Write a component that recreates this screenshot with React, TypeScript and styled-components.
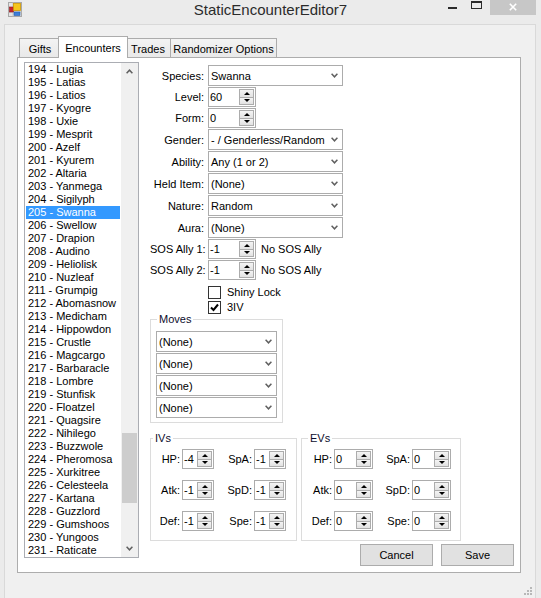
import { FC } from "react";
import styled, { createGlobalStyle } from "styled-components";

const GlobalStyle = createGlobalStyle`
  * {
    box-sizing: border-box;
  }
  html,
  body {
    margin: 0;
    padding: 0;
    background: #ebebeb;
  }
  body {
    font-family: "Liberation Sans", Arial, sans-serif;
    font-size: 11px;
    color: #000;
  }
`;

const pokemon = [
  "Lugia", "Latias", "Latios", "Kyogre", "Uxie", "Mesprit", "Azelf", "Kyurem",
  "Altaria", "Yanmega", "Sigilyph", "Swanna", "Swellow", "Drapion", "Audino",
  "Heliolisk", "Nuzleaf", "Grumpig", "Abomasnow", "Medicham", "Hippowdon",
  "Crustle", "Magcargo", "Barbaracle", "Lombre", "Stunfisk", "Floatzel",
  "Quagsire", "Nihilego", "Buzzwole", "Pheromosa", "Xurkitree", "Celesteela",
  "Kartana", "Guzzlord", "Gumshoos", "Yungoos", "Raticate",
];
const FIRST_ID = 194;
const SELECTED_ID = 205;

const tabs = [
  { title: "Gifts", width: 42 },
  { title: "Encounters", width: 70, active: true },
  { title: "Trades", width: 46 },
  { title: "Randomizer Options", width: 107 },
];

const comboFields = [
  { label: "Gender:", value: "- / Genderless/Random" },
  { label: "Ability:", value: "Any (1 or 2)" },
  { label: "Held Item:", value: "(None)" },
  { label: "Nature:", value: "Random" },
  { label: "Aura:", value: "(None)" },
];

const statRows = [
  ["HP:", "SpA:"],
  ["Atk:", "SpD:"],
  ["Def:", "Spe:"],
];
const ivValues = [
  ["-4", "-1"],
  ["-1", "-1"],
  ["-1", "-1"],
];

const Chevron: FC<{ $up?: boolean }> = ({ $up }) => (
  <svg width="7" height="5" viewBox="0 0 7 5">
    <path
      d={$up ? "M0.6 4.2 L3.5 1.2 L6.4 4.2" : "M0.6 0.8 L3.5 3.8 L6.4 0.8"}
      fill="none"
      stroke="#606060"
      strokeWidth="1.5"
    />
  </svg>
);

const Combo: FC<{ value: string; width: number }> = ({ value, width }) => (
  <ComboBox $width={width}>
    <span>{value}</span>
    <Chevron />
  </ComboBox>
);

const Numeric: FC<{ value: string; width: number }> = ({ value, width }) => (
  <NumericBox $width={width}>
    <NumericText>{value}</NumericText>
    <Spinner>
      <SpinButton>
        <Arrow $dir="up" />
      </SpinButton>
      <SpinButton>
        <Arrow $dir="down" />
      </SpinButton>
    </Spinner>
  </NumericBox>
);

const Check: FC<{ label: string; checked?: boolean }> = ({ label, checked }) => (
  <CheckRow>
    <CheckBox>
      {checked && (
        <svg width="9" height="9" viewBox="0 0 9 9">
          <path d="M1 4.5 L3.5 7 L8 1.5" fill="none" stroke="#000" strokeWidth="2" />
        </svg>
      )}
    </CheckBox>
    {label}
  </CheckRow>
);

const StatGroup: FC<{
  title: string;
  indent: number;
  width: number;
  columns: string;
  boxWidth: number;
  values: string[][];
}> = ({ title, indent, width, columns, boxWidth, values }) => (
  <GroupBox $width={width} $padding="4px 0 9px 0">
    <GroupTitle $indent={indent}>{title}</GroupTitle>
    <StatGrid $columns={columns}>
      {statRows.map((row, r) =>
        row.map((label, c) => [
          <StatLabel key={label}>{label}</StatLabel>,
          <Numeric key={label + "v"} value={values[r][c]} width={boxWidth} />,
        ]),
      )}
    </StatGrid>
  </GroupBox>
);

const App: FC = () => {
  return (
    <>
      <GlobalStyle />
      <Window>
        <TitleBar>
          <IconSlot>
            <svg width="14" height="15" viewBox="0 0 14 15">
              <rect x="0.5" y="0.5" width="13" height="14" fill="#e4e4e4" stroke="#a8a8a8" />
              <line x1="5" y1="0.5" x2="5" y2="14.5" stroke="#c4c4c4" />
              <line x1="0.5" y1="10" x2="13.5" y2="10" stroke="#c4c4c4" />
              <rect x="1.5" y="5" width="4" height="5" fill="#c9252b" stroke="#8e1418" strokeWidth="0.6" />
              <rect x="5.5" y="1.5" width="7" height="7" fill="#f5c51c" stroke="#cf9700" strokeWidth="0.8" />
              <rect x="6" y="10" width="6" height="3.5" fill="#3c7ed8" stroke="#235bb0" strokeWidth="0.6" />
            </svg>
          </IconSlot>
          <Title>StaticEncounterEditor7</Title>
          <Controls>
            <CaptionButton $width={22}>
              <svg width="9" height="15" viewBox="0 0 9 15">
                <rect x="0" y="7" width="9" height="2" fill="#2b2b2b" />
              </svg>
            </CaptionButton>
            <CaptionButton $width={27}>
              <svg width="11" height="15" viewBox="0 0 11 15">
                <rect x="0.5" y="1.5" width="10" height="7" fill="none" stroke="#2b2b2b" />
                <rect x="0" y="1" width="11" height="2" fill="#2b2b2b" />
              </svg>
            </CaptionButton>
            <CaptionButton $width={46} $close>
              <svg width="8" height="15" viewBox="0 0 8 15">
                <path d="M0.8 3.8 L7.2 10.2 M7.2 3.8 L0.8 10.2" stroke="#fff" strokeWidth="1.6" />
              </svg>
            </CaptionButton>
          </Controls>
        </TitleBar>

        <Client>
          <TabStrip>
            {tabs.map((tab) => (
              <Tab key={tab.title} $width={tab.width} $active={!!tab.active}>
                {tab.title}
              </Tab>
            ))}
          </TabStrip>

          <TabPage>
            <ListBox>
              <ListItems>
                {pokemon.map((name, i) => (
                  <ListItem key={name} $selected={FIRST_ID + i === SELECTED_ID}>
                    {FIRST_ID + i} - {name}
                  </ListItem>
                ))}
              </ListItems>
              <ScrollBar>
                <ScrollArrow>
                  <Chevron $up />
                </ScrollArrow>
                <ScrollTrack>
                  <ScrollThumb $offset={353} $size={70} />
                </ScrollTrack>
                <ScrollArrow>
                  <Chevron />
                </ScrollArrow>
              </ScrollBar>
            </ListBox>

            <EditorColumn>
              <FieldGrid>
                <FieldLabel>Species:</FieldLabel>
                <Combo value="Swanna" width={135} />
                <FieldLabel>Level:</FieldLabel>
                <Numeric value="60" width={48} />
                <FieldLabel>Form:</FieldLabel>
                <Numeric value="0" width={48} />
                {comboFields.map((field) => [
                  <FieldLabel key={field.label}>{field.label}</FieldLabel>,
                  <Combo key={field.label + "c"} value={field.value} width={135} />,
                ])}
                <FieldLabel>SOS Ally 1:</FieldLabel>
                <InlineRow>
                  <Numeric value="-1" width={48} />
                  <Note>No SOS Ally</Note>
                </InlineRow>
                <FieldLabel>SOS Ally 2:</FieldLabel>
                <InlineRow>
                  <Numeric value="-1" width={48} />
                  <Note>No SOS Ally</Note>
                </InlineRow>
                <CheckList>
                  <Check label="Shiny Lock" />
                  <Check label="3IV" checked />
                </CheckList>
              </FieldGrid>

              <MovesBox $width={133} $padding="5px 0 4px 5px">
                <GroupTitle $indent={1}>Moves</GroupTitle>
                <MoveList>
                  {[0, 1, 2, 3].map((n) => (
                    <Combo key={n} value="(None)" width={121} />
                  ))}
                </MoveList>
              </MovesBox>

              <StatsRow>
                <StatGroup
                  title="IVs"
                  indent={2}
                  width={147}
                  columns="31px 32px 40px 32px"
                  boxWidth={32}
                  values={ivValues}
                />
                <StatGroup
                  title="EVs"
                  indent={6}
                  width={160}
                  columns="32px 39px 39px 39px"
                  boxWidth={39}
                  values={statRows.map(() => ["0", "0"])}
                />
              </StatsRow>

              <ButtonRow>
                <PushButton>Cancel</PushButton>
                <PushButton>Save</PushButton>
              </ButtonRow>
            </EditorColumn>
          </TabPage>

          <Footer>
            <svg width="8" height="8" viewBox="0 0 8 8">
              <rect x="6" y="0" width="2" height="2" fill="#b8b8b8" />
              <rect x="3" y="3" width="2" height="2" fill="#b8b8b8" />
              <rect x="6" y="3" width="2" height="2" fill="#b8b8b8" />
              <rect x="0" y="6" width="2" height="2" fill="#b8b8b8" />
              <rect x="3" y="6" width="2" height="2" fill="#b8b8b8" />
              <rect x="6" y="6" width="2" height="2" fill="#b8b8b8" />
            </svg>
          </Footer>
        </Client>
      </Window>
    </>
  );
};

export default App;

const Window = styled.div`
  width: 541px;
  height: 598px;
  display: flex;
  flex-direction: column;
  background: #ebebeb;
  overflow: hidden;
`;

const TitleBar = styled.div`
  height: 24px;
  flex-shrink: 0;
  display: grid;
  grid-template-columns: 1fr auto 1fr;
  align-items: start;
`;

const IconSlot = styled.div`
  padding: 2px 0 0 8px;
  display: flex;
`;

const Title = styled.div`
  font-size: 15px;
  line-height: 20px;
  color: #2b2b2b;
  white-space: nowrap;
`;

const Controls = styled.div`
  justify-self: end;
  display: flex;
  padding-right: 5px;
`;

const CaptionButton = styled.div<{ $width: number; $close?: boolean }>`
  width: ${(p) => p.$width}px;
  height: 15px;
  display: flex;
  justify-content: center;
  background: ${(p) => (p.$close ? "#c7c7c7" : "transparent")};
`;

const Client = styled.div`
  flex: 1;
  margin: 0 5px 0 4px;
  background: #f0f0f0;
  border: 1px solid #d9d9d9;
  border-bottom: none;
  padding: 11px 0 0 12px;
  display: flex;
  flex-direction: column;
`;

const TabStrip = styled.div`
  height: 21px;
  display: flex;
  align-items: flex-end;
  padding-left: 2px;
`;

const Tab = styled.div<{ $width: number; $active: boolean }>`
  position: relative;
  width: ${(p) => p.$width}px;
  height: ${(p) => (p.$active ? 22 : 19)}px;
  margin: ${(p) => (p.$active ? "0 -3px -1px -2px" : "0 -1px 0 0")};
  padding-top: ${(p) => (p.$active ? 0 : 2)}px;
  z-index: ${(p) => (p.$active ? 1 : 0)};
  border: 1px solid #acacac;
  border-bottom: none;
  background: ${(p) =>
    p.$active ? "#ffffff" : "linear-gradient(#f3f3f3, #e9e9e9)"};
  display: flex;
  align-items: center;
  justify-content: center;
  white-space: nowrap;
`;

const TabPage = styled.div`
  width: 504px;
  height: 516px;
  flex-shrink: 0;
  border: 1px solid #adadad;
  background: #ffffff;
  display: flex;
  align-items: flex-start;
  padding: 4px 0 0 6px;
`;

const ListBox = styled.div`
  width: 115px;
  height: 496px;
  border: 1px solid #abadb3;
  background: #fff;
  display: flex;
`;

const ListItems = styled.div`
  flex: 1;
  overflow: hidden;
  padding: 0 1px;
`;

const ListItem = styled.div<{ $selected: boolean }>`
  height: 13px;
  line-height: 13px;
  padding-left: 2px;
  white-space: nowrap;
  background: ${(p) => (p.$selected ? "#3399ff" : "transparent")};
  color: ${(p) => (p.$selected ? "#ffffff" : "#000000")};
`;

const ScrollBar = styled.div`
  width: 17px;
  display: flex;
  flex-direction: column;
  background: #f0f0f0;
`;

const ScrollArrow = styled.div`
  height: 17px;
  display: flex;
  align-items: center;
  justify-content: center;
`;

const ScrollTrack = styled.div`
  flex: 1;
  display: flex;
  flex-direction: column;
  padding: 0 1px;
`;

const ScrollThumb = styled.div<{ $offset: number; $size: number }>`
  margin-top: ${(p) => p.$offset}px;
  height: ${(p) => p.$size}px;
  background: #cdcdcd;
`;

const EditorColumn = styled.div`
  width: 364px;
  margin-left: 11px;
  padding-top: 3px;
  display: flex;
  flex-direction: column;
`;

const FieldGrid = styled.div`
  display: grid;
  grid-template-columns: 56px auto;
  column-gap: 2px;
  row-gap: 1px;
  align-items: center;
  justify-items: start;
`;

const FieldLabel = styled.div`
  justify-self: stretch;
  text-align: right;
  padding-right: 2px;
  white-space: nowrap;
`;

const ComboBox = styled.div<{ $width: number }>`
  width: ${(p) => p.$width}px;
  height: 21px;
  border: 1px solid #acacac;
  background: #fff;
  display: flex;
  align-items: center;
  padding: 0 4px 0 2px;
  white-space: nowrap;

  svg {
    margin-left: auto;
    flex-shrink: 0;
  }
`;

const NumericBox = styled.div<{ $width: number }>`
  width: ${(p) => p.$width}px;
  height: 20px;
  border: 1px solid #acacac;
  background: #fff;
  display: flex;
  padding: 1px;
`;

const NumericText = styled.span`
  flex: 1;
  line-height: 16px;
`;

const Spinner = styled.div`
  width: 15px;
  display: flex;
  flex-direction: column;
`;

const SpinButton = styled.div`
  flex: 1;
  border: 1px solid #acacac;
  background: linear-gradient(#f4f4f4, #e2e2e2);
  display: flex;
  align-items: center;
  justify-content: center;

  & + & {
    margin-top: -1px;
  }
`;

const Arrow = styled.span<{ $dir: "up" | "down" }>`
  width: 0;
  height: 0;
  border-left: 3px solid transparent;
  border-right: 3px solid transparent;
  ${(p) =>
    p.$dir === "up"
      ? "border-bottom: 3px solid #000;"
      : "border-top: 3px solid #000;"}
`;

const InlineRow = styled.div`
  display: flex;
  align-items: center;
  gap: 5px;
`;

const Note = styled.span`
  white-space: nowrap;
`;

const CheckList = styled.div`
  grid-column: 2;
  display: flex;
  flex-direction: column;
  gap: 1px;
  padding-top: 4px;
`;

const CheckRow = styled.div`
  height: 14px;
  display: flex;
  align-items: center;
  gap: 6px;
`;

const CheckBox = styled.span`
  width: 13px;
  height: 13px;
  border: 1px solid #333;
  background: #fff;
  display: flex;
  align-items: center;
  justify-content: center;
`;

const GroupBox = styled.fieldset<{ $width: number; $padding: string }>`
  margin: 0;
  min-width: 0;
  width: ${(p) => p.$width}px;
  border: 1px solid #dcdcdc;
  padding: ${(p) => p.$padding};
`;

const MovesBox = styled(GroupBox)`
  margin-top: -1px;
`;

const GroupTitle = styled.legend<{ $indent: number }>`
  margin-left: ${(p) => p.$indent}px;
  padding: 0 2px;
  line-height: 13px;
  color: #0c0c2c;
`;

const MoveList = styled.div`
  display: flex;
  flex-direction: column;
  gap: 1px;
`;

const StatsRow = styled.div`
  display: flex;
  gap: 4px;
  margin-top: 9px;
`;

const StatGrid = styled.div<{ $columns: string }>`
  display: grid;
  grid-template-columns: ${(p) => p.$columns};
  row-gap: 11px;
  align-items: center;
`;

const StatLabel = styled.div`
  text-align: right;
  padding-right: 2px;
  white-space: nowrap;
`;

const ButtonRow = styled.div`
  display: flex;
  justify-content: flex-end;
  gap: 8px;
  margin-top: 3px;
`;

const PushButton = styled.button`
  width: 73px;
  height: 22px;
  padding: 0;
  border: 1px solid #acacac;
  background: #e1e1e1;
  font-family: inherit;
  font-size: 11px;
  color: #000;
`;

const Footer = styled.div`
  flex: 1;
  display: flex;
  justify-content: flex-end;
  align-items: flex-end;
  padding: 0 3px 3px 0;
`;
